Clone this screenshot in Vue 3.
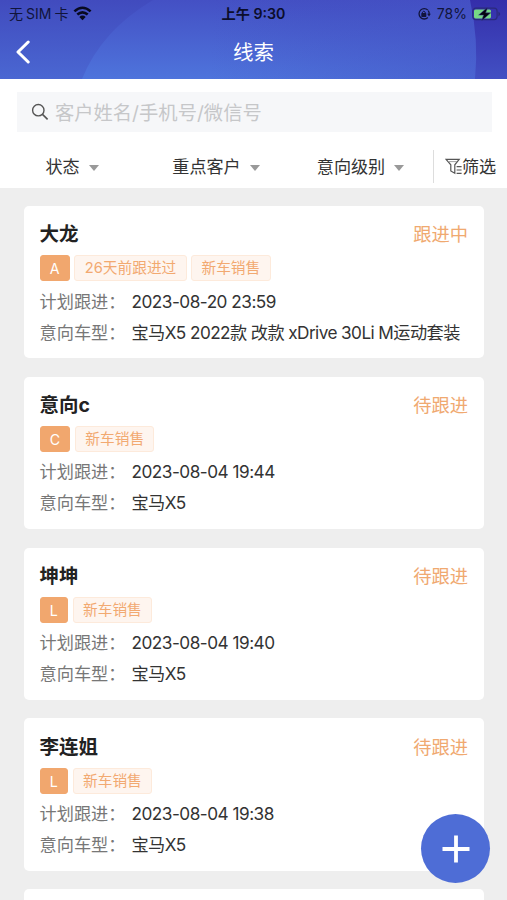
<script setup>
const leads = [
  { name: '大龙', level: 'A', tags: ['26天前跟进过', '新车销售'], status: '跟进中', time: '2023-08-20 23:59', car: '宝马X5 2022款 改款 xDrive 30Li M运动套装' },
  { name: '意向c', level: 'C', tags: ['新车销售'], status: '待跟进', time: '2023-08-04 19:44', car: '宝马X5' },
  { name: '坤坤', level: 'L', tags: ['新车销售'], status: '待跟进', time: '2023-08-04 19:40', car: '宝马X5' },
  { name: '李连姐', level: 'L', tags: ['新车销售'], status: '待跟进', time: '2023-08-04 19:38', car: '宝马X5' },
]
const filters = ['状态', '重点客户', '意向级别']
</script>

<template>
  <div class="screen">
    <header class="header">
      <svg class="header-bg" viewBox="0 0 507 79" preserveAspectRatio="none">
        <defs>
          <linearGradient id="base" x1="0" y1="0" x2="0" y2="1">
            <stop offset="0" stop-color="#414bbe" />
            <stop offset="1" stop-color="#4a67d2" />
          </linearGradient>
          <linearGradient id="glow" x1="0" y1="0" x2="0" y2="1">
            <stop offset="0" stop-color="#4450c4" />
            <stop offset="1" stop-color="#4e74dc" />
          </linearGradient>
          <linearGradient id="glow-fade" x1="0" y1="0" x2="1" y2="0">
            <stop offset="0.3" stop-color="#4049bc" stop-opacity="0" />
            <stop offset="1" stop-color="#4450c4" stop-opacity="0.5" />
          </linearGradient>
          <linearGradient id="edge" x1="0" y1="0" x2="0" y2="1">
            <stop offset="0" stop-color="#342eaa" />
            <stop offset="1" stop-color="#4250c3" />
          </linearGradient>
        </defs>
        <rect width="507" height="79" fill="url(#base)" />
        <path d="M153 0Q101 31 82 79H507V0Z" fill="url(#glow)" />
        <path d="M153 0Q101 31 82 79H507V0Z" fill="url(#glow-fade)" />
        <path d="M470 0Q479 40 475 79H507V0Z" fill="url(#edge)" />
      </svg>
      <div class="statusbar">
        <div class="carrier">
          <span>无<i class="sim">SIM</i>卡</span>
          <svg width="19" height="15" viewBox="0 0 19 15">
            <path d="M1.4 5.4Q9.5 -1.9 17.6 5.4M4.3 8.6Q9.5 4.1 14.7 8.6" fill="none" stroke="#080a20" stroke-width="2.6" />
            <path d="M6.3 10.9Q9.5 8.3 12.7 10.9L9.5 14.2Z" fill="#080a20" />
          </svg>
        </div>
        <div class="clock">上午 9:30</div>
        <div class="power">
          <svg class="lock" width="14" height="14" viewBox="0 0 14 14">
            <path d="M10.9 3.1A5.2 5.2 0 1 0 10.9 10.5M11.3 3.7Q12.4 5.2 12.1 7.5" fill="none" stroke="#11143a" stroke-width="1.3" />
            <path d="M10.2 6.8H13.8L12 9.4Z" fill="#11143a" />
            <rect x="4.3" y="6.1" width="5" height="3.8" rx=".6" fill="#11143a" />
            <path d="M5.4 6.3V5.2Q6.8 3.2 8.2 5.2V6.3" fill="none" stroke="#11143a" />
          </svg>
          <span>78%</span>
          <svg class="battery" width="29" height="14" viewBox="0 0 29 14">
            <rect x=".7" y="1.2" width="24.4" height="11.4" rx="3" fill="none" stroke="#2b2a7c" stroke-width="1.2" />
            <rect x="2" y="2.4" width="17" height="9" rx="1.6" fill="#76d985" />
            <path d="M26.4 4.5Q30 7 26.4 9.5Z" fill="#2b2a7c" />
            <path d="M15.7 .3L6.6 8.1H11.6L9.6 13.7L18.8 5.8H13.7Z" fill="#05060f" stroke="#3a3a9a" stroke-width=".5" />
          </svg>
        </div>
      </div>
      <div class="navbar">
        <svg class="back" width="16" height="24" viewBox="0 0 16 24">
          <path d="M13.2 2L3 12L13.2 22" fill="none" stroke="#fff" stroke-width="3" stroke-linecap="round" stroke-linejoin="round" />
        </svg>
        <h1>线索</h1>
        <span></span>
      </div>
    </header>

    <section class="tools">
      <div class="search">
        <svg width="18" height="18" viewBox="0 0 18 18">
          <circle cx="7.3" cy="7.2" r="5.7" fill="none" stroke="#555" stroke-width="1.4" />
          <path d="M11.5 11.4L16.6 16.4" stroke="#555" stroke-width="1.6" />
        </svg>
        <span>客户姓名/手机号/微信号</span>
      </div>
      <div class="filters">
        <div v-for="f in filters" :key="f" class="filter">
          <span>{{ f }}</span><i class="caret"></i>
        </div>
        <div class="sift">
          <svg width="17" height="17" viewBox="0 0 17 17">
            <path d="M1 1.3H14.2L9.8 6.8V15.2L5.8 13V6.8Z" fill="none" stroke="#555" stroke-width="1.2" />
            <path d="M3.2 3.6H12" stroke="#999" stroke-width=".9" />
            <path d="M11.6 8.6H16.6M11.6 12H16.6M11.6 15.4H16.6" stroke="#555" stroke-width="1.2" />
          </svg>
          <span>筛选</span>
        </div>
      </div>
    </section>

    <main class="list">
      <article v-for="lead in leads" :key="lead.name" class="card">
        <div class="top"><h2>{{ lead.name }}</h2><span class="status">{{ lead.status }}</span></div>
        <div class="tags">
          <span class="tag level">{{ lead.level }}</span>
          <span v-for="t in lead.tags" :key="t" class="tag">{{ t }}</span>
        </div>
        <div class="row"><span class="label">计划跟进：</span><span class="value">{{ lead.time }}</span></div>
        <div class="row"><span class="label">意向车型：</span><span class="value car">{{ lead.car }}</span></div>
      </article>
      <article class="card"></article>
    </main>

    <button class="add" aria-label="添加">
      <svg width="28" height="28" viewBox="0 0 28 28"><path d="M14 .5V27.5M.5 14H27.5" stroke="#fff" stroke-width="3.8" /></svg>
    </button>
  </div>
</template>

<style>
body { margin: 0; overflow: hidden; }
</style>

<style scoped>
.screen { position: relative; width: 507px; height: 900px; overflow: hidden; display: flex; flex-direction: column; background: #eee; font-family: Inter, "Noto Sans CJK SC", sans-serif; color: #333; box-sizing: border-box; white-space: nowrap; }
.header { position: relative; height: 79px; flex: none; overflow: hidden; }
.header-bg { position: absolute; inset: 0; width: 100%; height: 100%; }
.statusbar { position: relative; height: 28px; display: grid; grid-template-columns: 1fr auto 1fr; align-items: center; color: #11143a; font-size: 14px; line-height: 28px; }
.carrier { display: flex; align-items: center; gap: 5px; padding-left: 9px; }
.carrier svg { margin-top: -2px; }
.sim { font-style: normal; margin: 0 3px; }
.clock { font-size: 14.2px; font-weight: 600; color: #0b0d2b; }
.power { display: flex; align-items: center; justify-content: flex-end; padding-right: 6px; }
.power span { margin: 0 5px 0 6px; font-size: 14px; }
.navbar { position: relative; height: 48px; display: grid; grid-template-columns: 1fr auto 1fr; align-items: center; padding: 0 15px; }
h1 { margin: 0; padding-top: 2px; font-size: 20.5px; font-weight: 400; line-height: 46px; color: #fff; }
.tools { flex: none; height: 109px; background: #fff; box-sizing: border-box; padding-top: 13px; }
.search { height: 40px; margin: 0 15px 0 17px; padding-left: 14px; background: #f6f7f9; display: flex; align-items: center; gap: 6px; font-size: 19.3px; color: #c6c7c9; }
.search span { line-height: 40px; padding-top: 1px; }
.filters { height: 33px; margin-top: 18px; display: grid; grid-template-columns: 144px 144px 145px 1fr; font-size: 17.1px; line-height: 33px; }
.filter { display: flex; align-items: center; justify-content: center; gap: 9px; }
.caret { border: 5px solid transparent; border-top: 6px solid #999; border-bottom: 0; margin-top: 3px; }
.sift { border-left: 1px solid #ddd; display: flex; align-items: center; padding-left: 11px; }
.list { display: flex; flex-direction: column; gap: 18.4px; padding: 18.2px 23px 0 24px; }
.card { height: 152.3px; flex: none; box-sizing: border-box; padding: 14.3px 16px 0 15.5px; border-radius: 5px; background: #fff; }
.top { height: 28px; display: flex; justify-content: space-between; align-items: center; }
h2 { margin: 0; font-size: 19.5px; font-weight: 700; line-height: 28px; color: #222; }
.status { font-size: 18.3px; line-height: 28px; color: #f0a970; }
.tags { display: flex; gap: 4.6px; margin-top: 7px; height: 26px; }
.tag { height: 26px; box-sizing: border-box; border: 1px solid #fdeadb; border-radius: 3px; padding: 0 9.3px; background: #fef5ef; color: #f2a971; font-size: 14.7px; line-height: 25px; }
.level { background: #f1a76e; border-color: #f1a76e; color: #fff; font-size: 14.2px; }
.row { display: flex; height: 30.8px; line-height: 30.8px; font-size: 17.2px; }
.tags + .row { margin-top: 5.3px; }
.label { flex: none; width: 92px; color: #777; }
.value { color: #333; letter-spacing: -.5px; }
.car { letter-spacing: -.58px; }
.add { position: absolute; right: 17px; bottom: 17px; width: 69px; height: 69px; padding: 0; border: 0; border-radius: 50%; background: #4e6dd6; display: flex; align-items: center; justify-content: center; }
</style>
